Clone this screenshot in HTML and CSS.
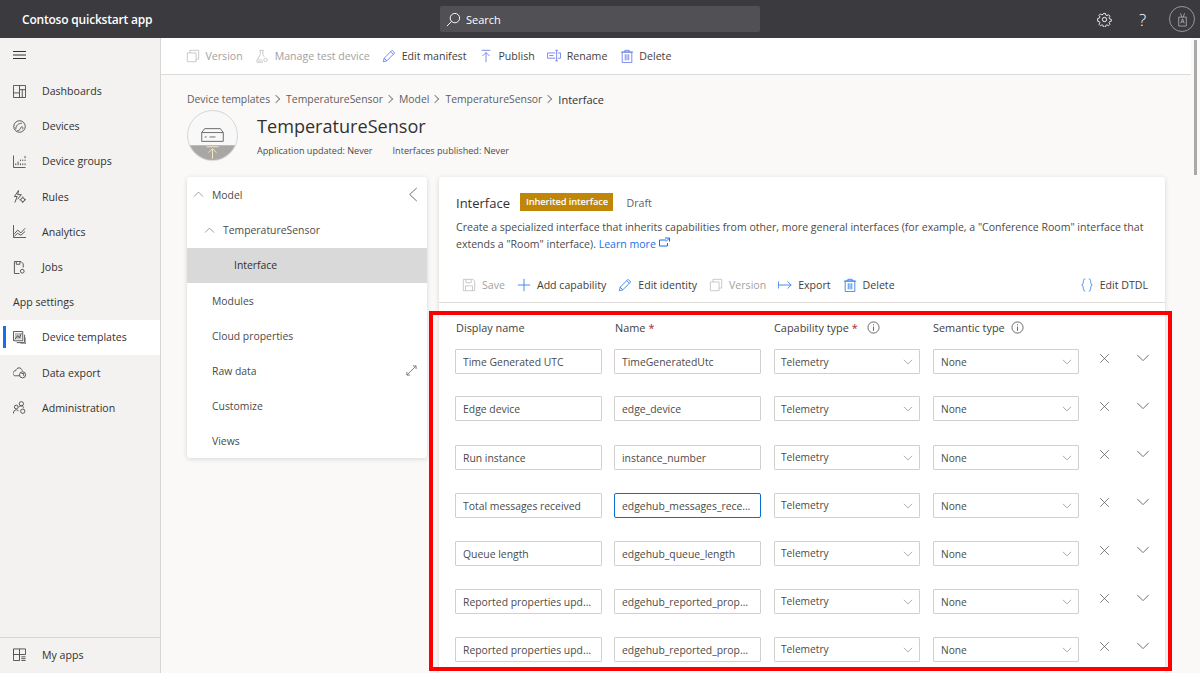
FILE: index.html
```html
<!DOCTYPE html>
<html>
<head>
	<meta charset="utf-8">
	<title>Contoso quickstart app</title>
	<link rel="stylesheet" href="styles.css">
</head>
<body>
	<svg class="defs" width="0" height="0">
		<symbol id="i-copy" viewBox="0 0 16 16"><path d="M1.500 4.500h10v10h-10zM4.500 4.500v-3h10v10h-3"/></symbol>
		<symbol id="i-flask" viewBox="0 0 16 16"><path d="M5 1.500h5M6 1.500v5L2 13.500c-.4.8 0 1.500 1 1.500h6M9 1.500v5l1.500 2.500"/><path class="solid" d="M3 11h5l1 2-1 2H3z"/><circle cx="12" cy="12.500" r="2"/></symbol>
		<symbol id="i-edit" viewBox="0 0 16 16"><path d="M1.500 14.500l1-4L11.500 1.500l3 3-9 9zM2.500 10.500l3 3M10 3l3 3"/></symbol>
		<symbol id="i-publish" viewBox="0 0 16 16"><path d="M3 1.500h10M8 15V4M4 8l4-4 4 4"/></symbol>
		<symbol id="i-rename" viewBox="0 0 16 16"><path d="M9.500 4.500H.5v6h9M12.500 4.500h3v6h-3M2.500 7.500h5M11 1.500v12M9.500 1.500h3M9.500 13.500h3"/></symbol>
		<symbol id="i-trash" viewBox="0 0 16 16"><path d="M2.500 3.500h11v12h-11zM1 3.500h14M5.500 3.500v-2h5v2M6 6v7M8 6v7M10 6v7"/></symbol>
		<symbol id="i-save" viewBox="0 0 16 16"><path d="M1.500 1.500h11l2 2v11h-13zM4.500 1.500v4h6v-4M4 14.500v-5.500h8v5.500"/></symbol>
		<symbol id="i-plus" viewBox="0 0 16 16"><path d="M8 1v14M1 8h14"/></symbol>
		<symbol id="i-export" viewBox="0 0 16 16"><path d="M.5 4v8M1 8h14M11 4l4 4-4 4"/></symbol>
		<symbol id="i-braces" viewBox="0 0 16 16"><path d="M6 1c-3.500 0-1 6-4 7 3 1 .5 7 4 7M10 1c3.500 0 1 6 4 7-3 1-.5 7-4 7"/></symbol>
		<symbol id="i-x" viewBox="0 0 14 14"><path d="M1.500 1.500l11 11M12.500 1.500l-11 11"/></symbol>
		<symbol id="i-down" viewBox="0 0 16 16"><path d="M1.500 4.500L8 11l6.500-6.500"/></symbol>
		<symbol id="i-up" viewBox="0 0 16 16"><path d="M1.500 11L8 4.500 14.500 11"/></symbol>
		<symbol id="i-info" viewBox="0 0 14 14"><circle cx="7" cy="7" r="6"/><path d="M7 6v4.500M7 3.500v1.200"/></symbol>
		<symbol id="n-dash" viewBox="0 0 14 14"><path d="M.5.5h13v13H.5zM.5 8.500h6.500M7 .5v13M7 5h6.500M10 5v8.500"/></symbol>
		<symbol id="n-devices" viewBox="0 0 14 14"><circle cx="7" cy="7" r="6.200"/><path d="M3 10C2.800 6 6 3.500 9.500 3.500M4.500 11.500c4 0 3-3.500 4.500-4 1.500-.5 2.500 1 1 2.500"/></symbol>
		<symbol id="n-groups" viewBox="0 0 14 14"><path d="M.5.5v13h13M3 11V9M5.500 11V7M8 11V9M8 6.500V5M10.500 11V9M10.500 6.500V5M13 11V9M13 6.500V5M13 3.500V1"/></symbol>
		<symbol id="n-rules" viewBox="0 0 14 14"><path d="M6 .5L1.500 7h3L2 13.500M6 .5L5 5h4L5 10"/><circle cx="10.500" cy="10.500" r="2"/><path d="M10.500 7v1.500M10.500 12.500V14M7 10.500h1.500M12.500 10.500H14"/></symbol>
		<symbol id="n-analytics" viewBox="0 0 14 14"><path d="M.5 0v13.500H14M1.500 9.500L5 5.500l3.500 3L13 3.500M1.500 12L5 9l3.500 2L13 7"/></symbol>
		<symbol id="n-jobs" viewBox="0 0 14 14"><path d="M7 13.500H1.500V.5h7L11 3v4M3.500.5v3h4V.5"/><circle cx="10" cy="11" r="2"/></symbol>
		<symbol id="n-templates" viewBox="0 0 14 14"><path d="M.5.5h10v10H.5zM12.500 4v8.500H4M14 7v7H8"/><path d="M2 9l3-4 2 2.500 2-5"/><path class="solid" d="M2 2h7v7H2z"/></symbol>
		<symbol id="n-export" viewBox="0 0 14 14"><path d="M4 10.500H2.500C1 10.500 0 9.500 0 8s1.300-3 3-3c.5-2 2-3 3.500-3S9.500 3 10 5"/><path d="M4 10.500h3"/><circle cx="10.300" cy="9.500" r="3.300"/><path d="M9 8h2.500v2.500"/></symbol>
		<symbol id="n-admin" viewBox="0 0 14 14"><circle cx="3.500" cy="6.500" r="2"/><circle cx="9" cy="3" r="2.300"/><path d="M.5 13.500c0-2.500 1-4 3-4 1.200 0 2 .5 2.500 1.500M6 6.500c1-1 2-1.200 3-1.200 1.500 0 2.500 1 2.500 2.500"/><circle cx="10.500" cy="11" r="2.300"/></symbol>
		<symbol id="n-apps" viewBox="0 0 14 14"><path d="M.5 1h13v6h-13zM.5 1v12.500h6.500V1M7 7v6.500M9 9.500h4.500M9 11.500h4.500M9 13.500h4.500"/></symbol>
	</svg>

	<!--Top bar-->
	<header class="topbar">
		<div class="brand">Contoso quickstart app</div>
		<div class="search">
			<svg class="search-icon" viewBox="0 0 16 16"><circle cx="9.500" cy="6.500" r="5"/><path d="M6 10l-5 5"/></svg>
			<span>Search</span>
		</div>
		<div class="top-actions">
			<svg class="top-icon" viewBox="0 0 16 16"><path d="M6.800 1h2.400l.4 2 1.300.6 1.800-1.100 1.700 1.700-1.100 1.800.6 1.300 2 .4v2.400l-2 .4-.6 1.300 1.100 1.800-1.700 1.700-1.800-1.100-1.300.6-.4 2H6.800l-.4-2-1.300-.6-1.800 1.100-1.700-1.700 1.100-1.800-.6-1.300-2-.4V6.800l2-.4.6-1.300-1.100-1.800 1.700-1.700 1.800 1.100 1.300-.6z" transform="translate(.6 .6) scale(.92)"/><circle cx="8" cy="8" r="2.300"/></svg>
			<span class="help">?</span>
			<div class="avatar">
				<svg viewBox="0 0 16 20"><path d="M2.500 6.500h11v13h-11zM5 1l2 5.500M11 1L9 6.500M5.500 15.500L8 9l2.500 6.500M6.500 13.500h3"/></svg>
			</div>
		</div>
	</header>

	<div class="layout">
		<!--Left navigation-->
		<nav class="sidebar">
			<div class="menu-btn">
				<svg class="menu-icon" viewBox="0 0 13 8"><path d="M0 .5h13M0 4h13M0 7.500h13"/></svg>
			</div>
			<a class="nav-item"><svg class="nav-icon"><use href="#n-dash"/></svg>Dashboards</a>
			<a class="nav-item"><svg class="nav-icon"><use href="#n-devices"/></svg>Devices</a>
			<a class="nav-item"><svg class="nav-icon"><use href="#n-groups"/></svg>Device groups</a>
			<a class="nav-item"><svg class="nav-icon"><use href="#n-rules"/></svg>Rules</a>
			<a class="nav-item"><svg class="nav-icon"><use href="#n-analytics"/></svg>Analytics</a>
			<a class="nav-item"><svg class="nav-icon"><use href="#n-jobs"/></svg>Jobs</a>
			<div class="nav-heading">App settings</div>
			<a class="nav-item active"><svg class="nav-icon"><use href="#n-templates"/></svg>Device templates</a>
			<a class="nav-item"><svg class="nav-icon"><use href="#n-export"/></svg>Data export</a>
			<a class="nav-item"><svg class="nav-icon"><use href="#n-admin"/></svg>Administration</a>
			<a class="nav-item my-apps"><svg class="nav-icon"><use href="#n-apps"/></svg>My apps</a>
		</nav>

		<main class="main">
			<div class="commandbar">
				<span class="cmd off"><svg class="cmd-icon"><use href="#i-copy"/></svg>Version</span>
				<span class="cmd off"><svg class="cmd-icon"><use href="#i-flask"/></svg>Manage test device</span>
				<span class="cmd"><svg class="cmd-icon"><use href="#i-edit"/></svg>Edit manifest</span>
				<span class="cmd"><svg class="cmd-icon"><use href="#i-publish"/></svg>Publish</span>
				<span class="cmd"><svg class="cmd-icon"><use href="#i-rename"/></svg>Rename</span>
				<span class="cmd"><svg class="cmd-icon"><use href="#i-trash"/></svg>Delete</span>
			</div>

			<div class="page">
				<div class="crumbs">
					<span>Device templates</span><i class="sep"></i>
					<span>TemperatureSensor</span><i class="sep"></i>
					<span>Model</span><i class="sep"></i>
					<span>TemperatureSensor</span><i class="sep"></i>
					<span class="current">Interface</span>
				</div>

				<div class="title-row">
					<div class="device-pic">
						<svg viewBox="0 0 50 50">
							<path class="pic-ground" d="M0 35h50v15H0z"/>
							<path class="pic-line" d="M14 31v-9l3-4h16l3 4v9zM14 22h22M17 26.500h2M22 26.500h6"/>
							<path class="pic-arrow" d="M19 36.500h12M25 49V39M21 42.500l4-4 4 4"/>
						</svg>
					</div>
					<div>
						<h1>TemperatureSensor</h1>
						<div class="meta"><span>Application updated: Never</span><span>Interfaces published: Never</span></div>
					</div>
				</div>

				<div class="columns">
					<!--Model tree-->
					<div class="tree card">
						<div class="tree-item"><svg class="tree-arrow"><use href="#i-up"/></svg>Model
							<svg class="tree-collapse" viewBox="0 0 10 16"><path d="M9 1L1.500 8 9 15"/></svg>
						</div>
						<div class="tree-item sub"><svg class="tree-arrow"><use href="#i-up"/></svg>TemperatureSensor</div>
						<div class="tree-item leaf selected">Interface</div>
						<div class="tree-item">Modules</div>
						<div class="tree-item">Cloud properties</div>
						<div class="tree-item">Raw data
							<svg class="tree-expand" viewBox="0 0 12 12"><path d="M1 11L11 1M7.500 1H11v3.500M1 7.500V11h3.500"/></svg>
						</div>
						<div class="tree-item">Customize</div>
						<div class="tree-item">Views</div>
					</div>

					<!--Interface editor-->
					<div class="editor card">
						<div class="editor-head">
							<div class="editor-title">
								<h2>Interface</h2>
								<span class="badge">Inherited interface</span>
								<span class="draft">Draft</span>
							</div>
							<p class="desc">Create a specialized interface that inherits capabilities from other, more general interfaces (for example, a "Conference Room" interface that extends a "Room" interface). <a class="learn">Learn more <svg class="learn-icon" viewBox="0 0 11 10"><path d="M7 3H.5v6h8V6M6 1h4.500v3.500M10.500 1L7 4.500"/></svg></a></p>
						</div>
						<div class="editor-bar">
							<span class="cmd off"><svg class="cmd-icon"><use href="#i-save"/></svg>Save</span>
							<span class="cmd"><svg class="cmd-icon"><use href="#i-plus"/></svg>Add capability</span>
							<span class="cmd"><svg class="cmd-icon"><use href="#i-edit"/></svg>Edit identity</span>
							<span class="cmd off"><svg class="cmd-icon"><use href="#i-copy"/></svg>Version</span>
							<span class="cmd"><svg class="cmd-icon"><use href="#i-export"/></svg>Export</span>
							<span class="cmd"><svg class="cmd-icon"><use href="#i-trash"/></svg>Delete</span>
							<span class="cmd dtdl"><svg class="cmd-icon"><use href="#i-braces"/></svg>Edit DTDL</span>
						</div>

						<div class="cap-head">
							<span>Display name</span>
							<span>Name <b>*</b></span>
							<span>Capability type <b>*</b><svg class="info"><use href="#i-info"/></svg></span>
							<span>Semantic type<svg class="info"><use href="#i-info"/></svg></span>
						</div>

						<div class="cap-row">
							<input class="field" readonly value="Time Generated UTC">
							<input class="field" readonly value="TimeGeneratedUtc">
							<div class="drop">Telemetry<svg class="drop-arrow"><use href="#i-down"/></svg></div>
							<div class="drop">None<svg class="drop-arrow"><use href="#i-down"/></svg></div>
							<svg class="row-x"><use href="#i-x"/></svg>
							<svg class="row-more"><use href="#i-down"/></svg>
						</div>
						<div class="cap-row second">
							<input class="field" readonly value="Edge device">
							<input class="field" readonly value="edge_device">
							<div class="drop">Telemetry<svg class="drop-arrow"><use href="#i-down"/></svg></div>
							<div class="drop">None<svg class="drop-arrow"><use href="#i-down"/></svg></div>
							<svg class="row-x"><use href="#i-x"/></svg>
							<svg class="row-more"><use href="#i-down"/></svg>
						</div>
						<div class="cap-row">
							<input class="field" readonly value="Run instance">
							<input class="field" readonly value="instance_number">
							<div class="drop">Telemetry<svg class="drop-arrow"><use href="#i-down"/></svg></div>
							<div class="drop">None<svg class="drop-arrow"><use href="#i-down"/></svg></div>
							<svg class="row-x"><use href="#i-x"/></svg>
							<svg class="row-more"><use href="#i-down"/></svg>
						</div>
						<div class="cap-row">
							<input class="field" readonly value="Total messages received">
							<input class="field focused" readonly value="edgehub_messages_received_total">
							<div class="drop">Telemetry<svg class="drop-arrow"><use href="#i-down"/></svg></div>
							<div class="drop">None<svg class="drop-arrow"><use href="#i-down"/></svg></div>
							<svg class="row-x"><use href="#i-x"/></svg>
							<svg class="row-more"><use href="#i-down"/></svg>
						</div>
						<div class="cap-row">
							<input class="field" readonly value="Queue length">
							<input class="field" readonly value="edgehub_queue_length">
							<div class="drop">Telemetry<svg class="drop-arrow"><use href="#i-down"/></svg></div>
							<div class="drop">None<svg class="drop-arrow"><use href="#i-down"/></svg></div>
							<svg class="row-x"><use href="#i-x"/></svg>
							<svg class="row-more"><use href="#i-down"/></svg>
						</div>
						<div class="cap-row">
							<input class="field" readonly value="Reported properties updated">
							<input class="field" readonly value="edgehub_reported_properties_updates">
							<div class="drop">Telemetry<svg class="drop-arrow"><use href="#i-down"/></svg></div>
							<div class="drop">None<svg class="drop-arrow"><use href="#i-down"/></svg></div>
							<svg class="row-x"><use href="#i-x"/></svg>
							<svg class="row-more"><use href="#i-down"/></svg>
						</div>
						<div class="cap-row">
							<input class="field" readonly value="Reported properties updated">
							<input class="field" readonly value="edgehub_reported_properties_updates">
							<div class="drop">Telemetry<svg class="drop-arrow"><use href="#i-down"/></svg></div>
							<div class="drop">None<svg class="drop-arrow"><use href="#i-down"/></svg></div>
							<svg class="row-x"><use href="#i-x"/></svg>
							<svg class="row-more"><use href="#i-down"/></svg>
						</div>
					</div>
				</div>
			</div>
		</main>

		<div class="scroll-track"><div class="scroll-thumb"></div></div>
	</div>

	<!--Highlight drawn over the screenshot-->
	<div class="highlight"></div>
</body>
</html>
```

FILE: styles.css
```css
* {
	box-sizing: border-box;
}

html, body {
	margin: 0;
	height: 100%;
	overflow: hidden;
}

body {
	font-family: 'Open Sans', 'Noto Sans', sans-serif;
	font-size: 10.6px;
	color: #323130;
	background-color: #faf9f8;
}

svg {
	fill: none;
	stroke: currentColor;
	stroke-width: 1;
	flex: none;
}

.solid {
	fill: currentColor;
	stroke: none;
	opacity: .35;
}

.defs {
	position: absolute;
}

/*Top bar*/
.topbar {
	height: 38px;
	background-color: #3b3a3f;
	display: flex;
	align-items: center;
	color: #fff;
}

.brand {
	width: 440px;
	padding-left: 22px;
	font-size: 12px;
	font-weight: 600;
	letter-spacing: -.2px;
}

.search {
	width: 320px;
	height: 26px;
	background-color: #515055;
	border-radius: 2px;
	display: flex;
	align-items: center;
	gap: 5px;
	padding-left: 6px;
	font-size: 11px;
}

.search-icon {
	width: 15px;
	height: 15px;
}

.top-actions {
	margin-left: auto;
	display: flex;
	align-items: center;
}

.top-icon {
	width: 15px;
	height: 15px;
}

.help {
	font-size: 17px;
	margin-left: 27px;
	font-weight: 300;
	width: 11px;
}

.avatar {
	width: 26px;
	height: 26px;
	margin: 0 5px 0 19px;
	border: 1px solid #98979a;
	border-radius: 50%;
	display: flex;
	align-items: center;
	justify-content: center;
}

.avatar svg {
	width: 11px;
	height: 15px;
	color: #c8c8c8;
}

/*Layout*/
.layout {
	display: flex;
	height: calc(100% - 38px);
}

.sidebar {
	width: 161px;
	flex: none;
	background-color: #f3f2f1;
	border-right: 1px solid #d8d6d4;
	display: flex;
	flex-direction: column;
}

.menu-btn {
	height: 35.5px;
	padding: 13px 0 0 13px;
}

.menu-icon {
	display: block;
	width: 13px;
	height: 8px;
}

.nav-item, .nav-heading {
	height: 35.2px;
	display: flex;
	align-items: center;
	flex: none;
}

.nav-item {
	position: relative;
	padding-left: 13px;
}

.nav-icon {
	width: 13px;
	height: 13px;
	margin-right: 16px;
	color: #4f4e4d;
}

.nav-heading {
	padding-left: 13px;
}

.nav-item.active {
	background-color: #fff;
}

.nav-item.active::before {
	content: "";
	position: absolute;
	left: 3px;
	top: 6px;
	bottom: 7px;
	width: 3px;
	background-color: #1a6fe8;
}

.my-apps {
	margin-top: auto;
	height: 36px;
	padding-bottom: 2px;
	border-top: 1px solid #d8d6d4;
}

/*Main*/
.main {
	flex: 1;
	min-width: 0;
	overflow: hidden;
}

.commandbar {
	height: 37px;
	background-color: #fff;
	border-bottom: 1px solid #dcdbda;
	display: flex;
	align-items: center;
	padding-left: 25px;
	gap: 12.5px;
}

.commandbar .cmd {
	gap: 5.5px;
}

.cmd {
	display: flex;
	align-items: center;
	gap: 6px;
	color: #3f3e3d;
}

.cmd.off {
	color: #a3a1a0;
}

.cmd-icon {
	width: 14px;
	height: 14px;
	color: #3a76e6;
}

.commandbar .cmd-icon {
	color: #6a7ce8;
}

.commandbar .cmd.off .cmd-icon, .cmd.off .cmd-icon {
	color: #c4c3c2;
}

.page {
	padding: 0 26px;
}

.crumbs {
	height: 33px;
	padding-top: 15px;
	display: flex;
	align-items: center;
	font-size: 10.4px;
	color: #605e5c;
}

.crumbs .current {
	color: #323130;
	font-size: 11px;
	font-weight: 500;
}

.sep {
	width: 6px;
	height: 6px;
	margin: 0 7px 0 3px;
	border-top: 1px solid #8a8886;
	border-right: 1px solid #8a8886;
	transform: rotate(45deg);
}

.title-row {
	display: flex;
	gap: 19px;
	height: 69px;
	padding-top: 2px;
}

.device-pic {
	width: 51px;
	height: 51px;
	border-radius: 50%;
	border: 1px solid #d8d6d4;
	background-color: #f8f8f8;
	overflow: hidden;
}

.device-pic svg {
	display: block;
	width: 100%;
	height: 100%;
}

.pic-ground {
	fill: #a8a7a6;
	stroke: none;
}

.pic-line {
	stroke: #6b6a69;
}

.pic-arrow {
	stroke: #f3e6c4;
}

h1 {
	margin: 0;
	font-size: 18.1px;
	font-weight: 500;
	line-height: 26px;
	padding-top: 3px;
}

.meta {
	font-size: 9.1px;
	margin-top: 5px;
	display: flex;
	gap: 20px;
	color: #4c4b4a;
}

.columns {
	display: flex;
	gap: 12px;
	align-items: flex-start;
}

.card {
	background-color: #fff;
	border-radius: 3px;
	box-shadow: 0 1px 5px rgba(0, 0, 0, .14);
}

/*Model tree*/
.tree {
	width: 240px;
	height: 281px;
	padding-top: .4px;
	flex: none;
	font-size: 10.4px;
}

.tree-item {
	position: relative;
	height: 35.2px;
	display: flex;
	align-items: center;
	padding-left: 25px;
	color: #4c4b4a;
}

.tree-arrow {
	position: absolute;
	left: 6px;
	width: 11px;
	height: 11px;
	color: #777;
}

.tree-item.sub {
	padding-left: 36px;
}

.tree-item.sub .tree-arrow {
	left: 17px;
}

.tree-item.leaf {
	padding-left: 47px;
}

.tree-item.selected {
	background-color: #d9d9d9;
	color: #323130;
}

.tree-collapse {
	position: absolute;
	right: 9px;
	width: 10px;
	height: 15px;
	color: #666;
}

.tree-expand {
	position: absolute;
	right: 10px;
	width: 11px;
	height: 11px;
	color: #777;
}

/*Interface editor*/
.editor {
	flex: 1;
	min-width: 0;
	height: 520px;
}

.editor-head {
	padding: 17px 17px 0;
}

.editor-title {
	display: flex;
	align-items: center;
	height: 18px;
	margin-top: -1px;
}

h2 {
	margin: 0;
	font-size: 13px;
	font-weight: 500;
	width: 64px;
	padding-top: 2px;
}

.badge {
	background-color: #c08608;
	color: #fff;
	font-size: 9.4px;
	font-weight: 600;
	height: 18px;
	line-height: 18px;
	padding: 0 5.5px 0 6px;
	letter-spacing: -.15px;
}

.draft {
	margin-left: 13px;
	padding-top: 1px;
	color: #605e5c;
}

.desc {
	margin: 8px 0 0;
	line-height: 17px;
	width: 700px;
	font-size: 10.55px;
	color: #4c4b4a;
}

.learn {
	color: #1a6fe8;
}

.learn-icon {
	width: 11px;
	height: 10px;
	vertical-align: 1px;
}

.editor-bar {
	height: 36px;
	margin-top: 14px;
	padding: 0 17px 0 23px;
	border-bottom: 1px solid #dcdbda;
	display: flex;
	align-items: center;
	gap: 12px;
}

.editor-bar .cmd-icon {
	color: #2f7fee;
}

.editor-bar .cmd.off .cmd-icon {
	color: #c4c3c2;
}

.dtdl {
	margin-left: auto;
}

.cap-head {
	display: grid;
	grid-template-columns: 147px 147px 147px 146px;
	column-gap: 12px;
	padding: 16px 0 0 17px;
	height: 46px;
	font-size: 10.9px;
}

.cap-head span {
	display: flex;
	align-items: center;
	gap: 3px;
	height: 17px;
	color: #3f3e3d;
	font-weight: 500;
}

.cap-head b {
	color: #a4262c;
	font-weight: 400;
}

.info {
	width: 13px;
	height: 13px;
	margin-left: 6px;
	color: #605e5c;
}

.cap-head span:last-child .info {
	margin-left: 3px;
}

.cap-row {
	display: flex;
	align-items: flex-start;
	height: 48px;
	padding-left: 16px;
}

.cap-row.second {
	margin-top: -1px;
	height: 49px;
}

.field, .drop {
	height: 25px;
	width: 147px;
	border: 1px solid #d2d0ce;
	border-radius: 1px;
	background-color: #fff;
	font: inherit;
	font-size: 10.4px;
	color: #4c4b4a;
	padding: 0 7px;
	margin-right: 12px;
	flex: none;
}

.field {
	text-overflow: ellipsis;
	outline: none;
}

.field.focused {
	border-color: #0a6ed1;
	border-radius: 2px;
}

.drop {
	width: 146px;
	margin-right: 13px;
	position: relative;
	display: flex;
	align-items: center;
	font-size: 10.2px;
}

.field + .drop {
	margin-left: 1px;
	padding-left: 6px;
}

.second ~ .cap-row .field + .drop {
	padding-bottom: 2px;
}

.drop-arrow {
	position: absolute;
	right: 6px;
	top: 7px;
	width: 10px;
	height: 10px;
	color: #777;
}

.row-x {
	width: 11px;
	height: 11px;
	margin: 4px 0 0 7px;
	color: #605e5c;
}

.row-more {
	width: 14px;
	height: 14px;
	margin: 2px 0 0 26px;
	color: #605e5c;
}

.second .row-x {
	margin-top: 5px;
}

.second .row-more {
	margin-top: 3px;
}

/*Scrollbar*/
.scroll-track {
	width: 9px;
	flex: none;
	padding: 2px 3px 0;
}

.scroll-thumb {
	width: 3px;
	height: 135px;
	background-color: #a9a9a9;
}

/*Red box*/
.highlight {
	position: absolute;
	left: 429px;
	top: 311px;
	width: 743px;
	height: 360px;
	border: 4px solid #ff0000;
}
```
